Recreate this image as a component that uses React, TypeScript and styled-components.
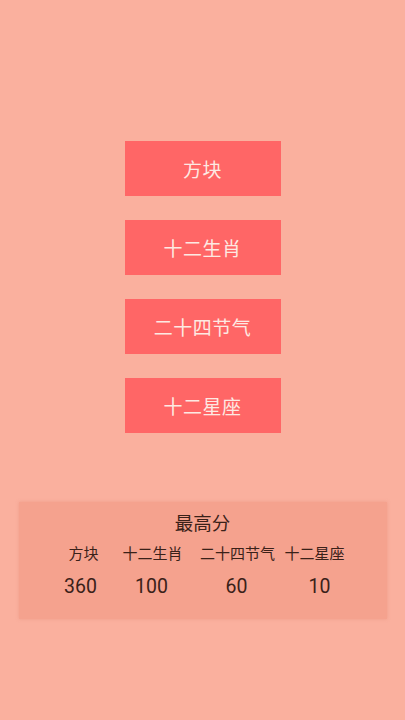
import styled, { createGlobalStyle } from 'styled-components';

const GlobalStyle = createGlobalStyle`
  html, body {
    margin: 0;
    padding: 0;
    background-color: #fab09e;
  }
  body {
    font-family: Roboto, "Noto Sans CJK SC", sans-serif;
  }
`;

const Screen = styled.div`
  width: 405px;
  height: 720px;
  display: flex;
  flex-direction: column;
  align-items: center;
  background-color: #fab09e;
`;

const Menu = styled.div`
  display: flex;
  flex-direction: column;
  gap: 24px;
  margin-top: 141px;
`;

const MenuButton = styled.button`
  width: 156px;
  height: 55px;
  border: none;
  background-color: #ff6666;
  color: #fde9e2;
  font-family: Roboto, "Noto Sans CJK SC", sans-serif;
  font-size: 19px;
  letter-spacing: 0.5px;
  padding: 0;
`;

const ScorePanel = styled.div`
  margin-top: 69px;
  width: 368px;
  height: 117px;
  box-sizing: border-box;
  background-color: #f5a28e;
  box-shadow: 0 0 3px rgba(230, 140, 120, 0.5);
  color: #3a2119;
  padding-top: 10px;
  display: flex;
  flex-direction: column;
  align-items: center;
`;

const PanelTitle = styled.div`
  font-size: 18.5px;
  line-height: 24px;
`;

const ScoreGrid = styled.div`
  align-self: flex-start;
  margin-top: 8px;
  margin-left: 35px;
  display: grid;
  grid-template-columns: 60px 78px 92px 62px;
  row-gap: 11px;
  justify-items: center;
`;

const Label = styled.div`
  font-size: 15px;
  line-height: 20px;
`;

const Value = styled.div<{ $shift?: number }>`
  font-size: 19.5px;
  line-height: 24px;
  transform: translateX(${(p) => p.$shift ?? 0}px);
`;

const games = ['方块', '十二生肖', '二十四节气', '十二星座'];
const scores = [
  { value: 360, shift: -3 },
  { value: 100, shift: -1 },
  { value: 60, shift: -1 },
  { value: 10, shift: 5 },
];

export default function App() {
  return (
    <>
      <GlobalStyle />
      <Screen>
        <Menu>
          {games.map((g) => (
            <MenuButton key={g}>{g}</MenuButton>
          ))}
        </Menu>
        <ScorePanel>
          <PanelTitle>最高分</PanelTitle>
          <ScoreGrid>
            {games.map((g) => (
              <Label key={g}>{g}</Label>
            ))}
            {scores.map((s) => (
              <Value key={s.value} $shift={s.shift}>
                {s.value}
              </Value>
            ))}
          </ScoreGrid>
        </ScorePanel>
      </Screen>
    </>
  );
}
